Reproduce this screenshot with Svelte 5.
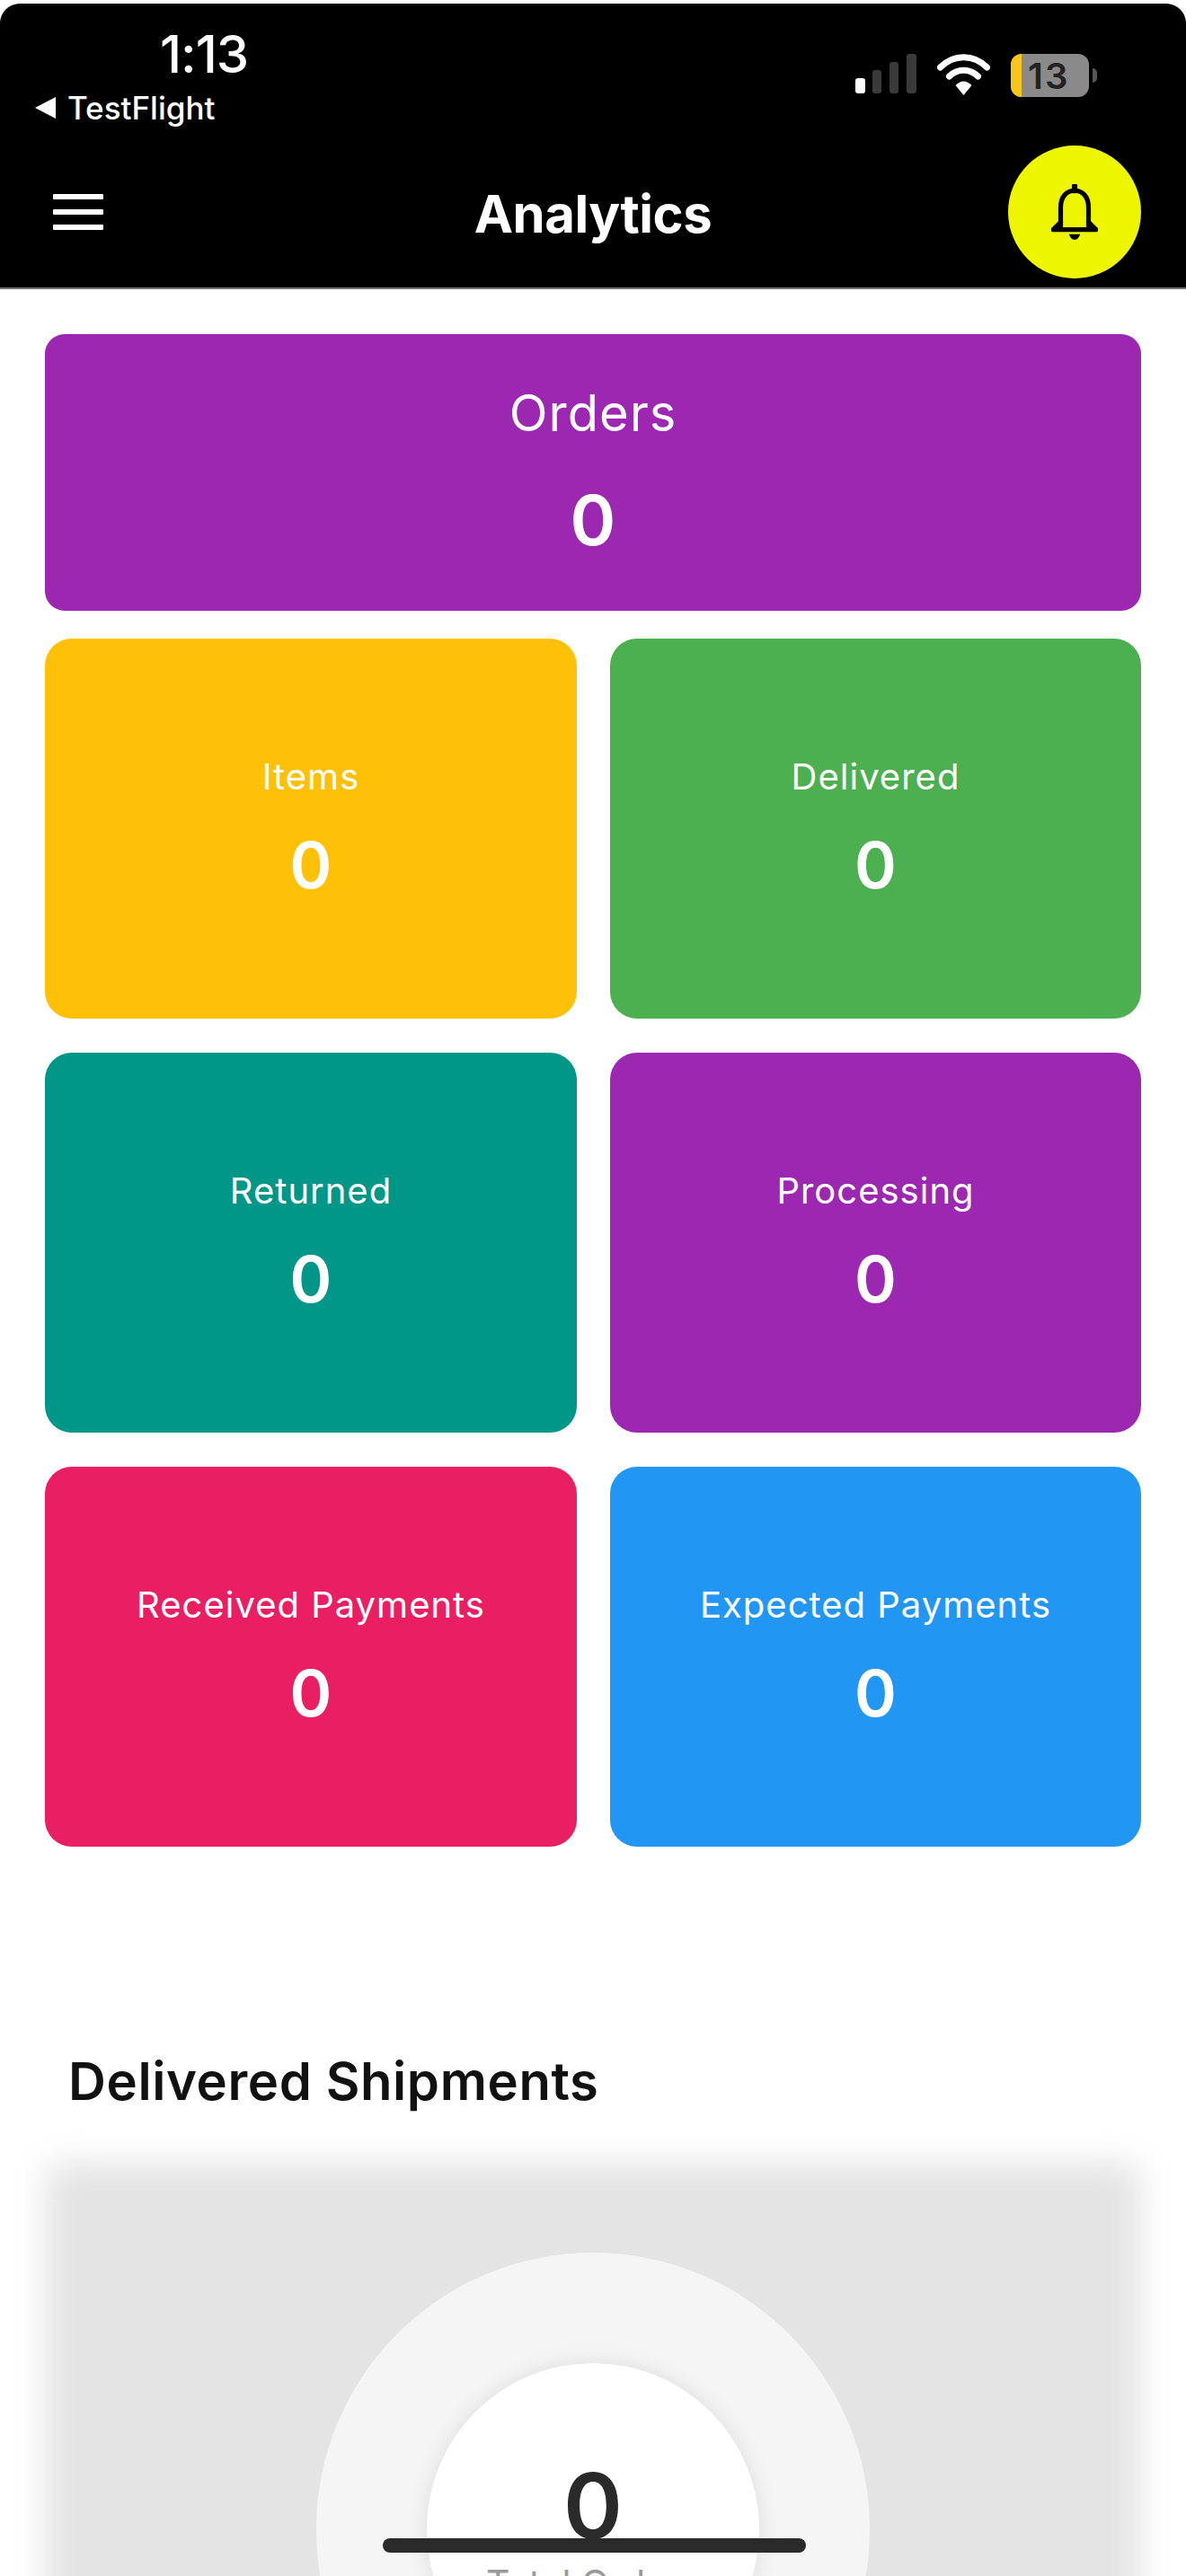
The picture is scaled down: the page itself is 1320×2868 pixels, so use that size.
<script>
  const cards = [
    { label: 'Items', color: '#ffc107' },
    { label: 'Delivered', color: '#4caf50' },
    { label: 'Returned', color: '#009688' },
    { label: 'Processing', color: '#9c27b0' },
    { label: 'Received Payments', color: '#e91e63' },
    { label: 'Expected Payments', color: '#2196f3' }
  ];
</script>

<div class="page">
  <header class="header">
    <div class="status">
      <div class="status-left">
        <div class="time">1:13</div>
        <div class="back"><span class="tri"></span>TestFlight</div>
      </div>
      <div class="status-right">
        <svg width="68" height="44" viewBox="0 0 68 44">
          <rect x="0" y="27" width="11" height="17" rx="3" fill="#fff" />
          <rect x="19" y="18" width="10" height="26" rx="3" fill="#3a3a3a" />
          <rect x="38" y="9" width="10" height="35" rx="3" fill="#3a3a3a" />
          <rect x="57" y="0" width="11" height="44" rx="3" fill="#3a3a3a" />
        </svg>
        <svg width="59" height="46" viewBox="0 0 58 46">
          <path d="M3 15 C18 0 40 0 55 15" fill="none" stroke="#fff" stroke-width="7" stroke-linecap="round" />
          <path d="M13 25 C22 16 36 16 45 25" fill="none" stroke="#fff" stroke-width="7" stroke-linecap="round" />
          <path d="M20 35 Q29 26 38 35 L29 46 Z" fill="#fff" />
        </svg>
        <div class="battery">
          <div class="batt-body"><span class="batt-fill"></span><span class="batt-num">13</span></div>
          <span class="batt-cap"></span>
        </div>
      </div>
    </div>
    <div class="toolbar">
      <div class="menu"><span></span><span></span><span></span></div>
      <h1>Analytics</h1>
      <div class="bell">
        <svg width="52" height="62" viewBox="0 0 50 60">
          <path d="M25 2 V7" stroke="#000" stroke-width="6" stroke-linecap="round" />
          <path d="M10 47 V25 C10 14 16 7 25 7 C34 7 40 14 40 25 V47" fill="none" stroke="#000" stroke-width="5" />
          <path d="M2 49 L10 41 M48 49 L40 41 M2 49 H48" fill="none" stroke="#000" stroke-width="5" stroke-linecap="round" />
          <path d="M19 54 H31 Q29 60 25 60 Q21 60 19 54 Z" fill="#000" />
        </svg>
      </div>
    </div>
  </header>

  <main class="content">
    <section class="card wide">
      <div class="label">Orders</div>
      <div class="value">0</div>
    </section>
    <div class="grid">
      {#each cards as c}
        <section class="card small" style="background: {c.color}">
          <div class="label">{c.label}</div>
          <div class="value">0</div>
        </section>
      {/each}
    </div>

    <h2>Delivered Shipments</h2>

    <section class="chart">
      <div class="ring">
        <div class="hole">
          <div class="total">0</div>
          <div class="total-label">Total Orders</div>
        </div>
      </div>
    </section>
  </main>

  <div class="home"></div>
</div>

<style>
  :global(body) {
    margin: 0;
    background: #fff;
  }
  .page {
    position: relative;
    width: 1320px;
    height: 2868px;
    overflow: hidden;
    background: #fff;
    font-family: Inter, "Liberation Sans", sans-serif;
    padding-top: 4px;
    box-sizing: border-box;
  }
  .header {
    height: 318px;
    background: #000;
    color: #fff;
    border-radius: 22px 22px 0 0;
    box-sizing: border-box;
    border-bottom: 2px solid #777;
  }
  .status {
    display: flex;
    justify-content: space-between;
    height: 151px;
  }
  .status-left {
    padding: 26px 0 0 39px;
  }
  .time {
    font-size: 58px;
    font-weight: 500;
    line-height: 60px;
    margin-left: 139px;
    letter-spacing: -1px;
  }
  .back {
    display: flex;
    align-items: center;
    font-size: 35px;
    font-weight: 500;
    line-height: 40px;
    margin-top: 10px;
    gap: 13px;
  }
  .tri {
    width: 0;
    height: 0;
    border-style: solid;
    border-width: 12px 23px 12px 0;
    border-color: transparent #fff transparent transparent;
  }
  .status-right {
    display: flex;
    align-items: flex-start;
    padding: 56px 99px 0 0;
    gap: 23px;
  }
  .battery {
    display: flex;
    align-items: center;
  }
  .batt-body {
    width: 87px;
    height: 48px;
    border-radius: 12px;
    background: #8a8a8a;
    overflow: hidden;
    display: flex;
    align-items: center;
  }
  .batt-fill {
    width: 12px;
    height: 100%;
    background: #f7c51b;
  }
  .batt-num {
    font-size: 40px;
    font-weight: 600;
    color: #222;
    margin-left: 7px;
    letter-spacing: 2px;
  }
  .batt-cap {
    width: 5px;
    height: 16px;
    margin-left: 4px;
    background: #555;
    border-radius: 0 5px 5px 0;
  }
  .toolbar {
    display: flex;
    align-items: center;
    justify-content: space-between;
    height: 162px;
    padding: 0 50px 0 59px;
    position: relative;
  }
  .menu {
    display: flex;
    flex-direction: column;
    gap: 11px;
    width: 56px;
  }
  .menu span {
    height: 6px;
    background: #fff;
    border-radius: 1px;
  }
  h1 {
    position: absolute;
    left: 0;
    right: 0;
    margin: 4px 0 0;
    text-align: center;
    font-size: 58px;
    font-weight: 700;
    letter-spacing: -0.5px;
  }
  .bell {
    width: 148px;
    height: 148px;
    border-radius: 50%;
    background: #eef500;
    display: flex;
    align-items: center;
    justify-content: center;
  }
  .content {
    padding: 50px 50px 0;
  }
  .card {
    color: #fff;
    text-align: center;
    display: flex;
    flex-direction: column;
    align-items: center;
    justify-content: center;
    box-sizing: border-box;
  }
  .wide {
    height: 308px;
    background: #9c27b0;
    border-radius: 22px;
  }
  .wide .label {
    font-size: 56px;
    line-height: 66px;
    letter-spacing: 1px;
  }
  .wide .value {
    font-size: 77px;
    font-weight: 600;
    line-height: 92px;
    margin-top: 40px;
  }
  .grid {
    display: grid;
    grid-template-columns: 592px 591px;
    gap: 38px 37px;
    margin-top: 31px;
  }
  .small {
    height: 423px;
    border-radius: 30px;
  }
  .small .label {
    font-size: 40px;
    line-height: 48px;
    letter-spacing: 1px;
  }
  .small .value {
    font-size: 71px;
    font-weight: 600;
    line-height: 84px;
    margin-top: 32px;
  }
  h2 {
    margin: 229px 0 0 26px;
    font-size: 58px;
    line-height: 64px;
    font-weight: 600;
    color: #111;
    letter-spacing: 0.6px;
  }
  .chart {
    position: relative;
    margin-top: 59px;
    height: 800px;
    display: flex;
    justify-content: center;
    padding-top: 100px;
    box-sizing: border-box;
  }
  .chart::before {
    content: "";
    position: absolute;
    inset: 0;
    background: #e4e4e4;
    border-radius: 20px;
    filter: blur(18px);
  }
  .ring {
    position: relative;
    width: 616px;
    height: 616px;
    border-radius: 50%;
    background: #f5f5f5;
    display: flex;
    align-items: center;
    justify-content: center;
  }
  .hole {
    width: 370px;
    height: 370px;
    border-radius: 50%;
    background: #fff;
    box-shadow: 0 0 24px rgba(0, 0, 0, 0.1);
    display: flex;
    flex-direction: column;
    align-items: center;
    padding-top: 104px;
    box-sizing: border-box;
  }
  .total {
    font-size: 100px;
    line-height: 110px;
    font-weight: 600;
    color: #2a2a2a;
  }
  .total-label {
    font-size: 41px;
    line-height: 46px;
    color: #999;
    margin-top: 8px;
    white-space: nowrap;
  }
  .home {
    position: absolute;
    left: 426px;
    top: 2826px;
    width: 471px;
    height: 16px;
    border-radius: 8px;
    background: #2a2a2a;
  }
</style>
